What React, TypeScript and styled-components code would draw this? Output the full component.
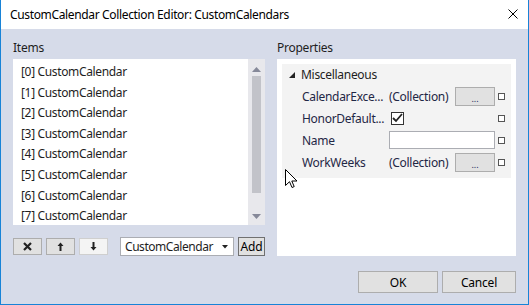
import React from "react";
import styled, { createGlobalStyle } from "styled-components";

const Global = createGlobalStyle`
  html, body { margin: 0; padding: 0; background: #ffffff; }
  body { font-family: "Noto Sans", "Open Sans", sans-serif; }
  * { box-sizing: border-box; }
`;

const FONT = `"Noto Sans", "Open Sans", sans-serif`;

const Window = styled.div`
  position: relative;
  width: 529px;
  height: 305px;
  display: flex;
  flex-direction: column;
  border-left: 1px solid #1883d7;
  border-right: 1px solid #1883d7;
  border-bottom: 1px solid #1883d7;
  font-family: ${FONT};
  font-size: 12px;
  color: #1e1e1e;
  overflow: hidden;
`;

const TitleBar = styled.div`
  height: 29px;
  flex: none;
  background: #ffffff;
  display: flex;
  align-items: center;
  justify-content: space-between;
  padding: 0 10px 0 9px;
`;

const Title = styled.span`
  font-size: 12px;
  color: #000;
  letter-spacing: -0.35px;
`;

const CloseBtn = styled.span`
  width: 10px;
  height: 10px;
  display: flex;
  margin-top: -1px;
`;

const Body = styled.div`
  flex: 1;
  background: #d6dbe9;
  display: flex;
  flex-direction: column;
  padding: 10px 11px 11px 12px;
`;

const Columns = styled.div`
  display: flex;
  gap: 12px;
`;

const Column = styled.div<{ $w: number }>`
  width: ${(p) => p.$w}px;
  display: flex;
  flex-direction: column;
`;

const GroupLabel = styled.div`
  height: 18px;
  line-height: 18px;
  margin-bottom: 2px;
  color: #1e1e1e;
  letter-spacing: -0.25px;
`;

const ListBox = styled.div`
  height: 166px;
  background: #fff;
  display: flex;
`;

const ListItems = styled.div`
  flex: 1;
  padding: 3px 0 0 8px;
`;

const ListItem = styled.div`
  height: 20.6px;
  line-height: 20.6px;
  letter-spacing: -0.35px;
  color: #1e1e1e;
`;

const ScrollBar = styled.div`
  width: 17px;
  background: #e8e8ec;
  display: flex;
  flex-direction: column;
  align-items: center;
  padding: 4px 0 3px;
`;

const ScrollArrow = styled.div`
  height: 12px;
  display: flex;
  align-items: center;
  justify-content: center;
`;

const Thumb = styled.div`
  width: 9px;
  height: 117px;
  background: #c2c3c9;
  margin-top: 1px;
`;

const Spacer = styled.div`
  flex: 1;
`;

const Toolbar = styled.div`
  margin-top: 12px;
  display: flex;
  align-items: center;
`;

const ToolButton = styled.div<{ $disabled?: boolean }>`
  width: 29px;
  height: 17px;
  margin-right: 4px;
  display: flex;
  align-items: center;
  justify-content: center;
  background: ${(p) => (p.$disabled ? "#f4f4f4" : "#e1e1e1")};
  border: 1px solid ${(p) => (p.$disabled ? "#cfcfcf" : "#adadad")};
`;

const Combo = styled.div`
  margin-left: 8px;
  width: 114px;
  height: 19px;
  background: #fff;
  border: 1px solid #abadb3;
  display: flex;
  align-items: center;
  justify-content: space-between;
  padding: 0 5px 0 4px;
  letter-spacing: -0.45px;
  white-space: nowrap;
`;

const AddButton = styled.div`
  margin-left: 4px;
  width: 27px;
  height: 19px;
  background: #e1e1e1;
  border: 1px solid #707070;
  display: flex;
  align-items: center;
  justify-content: center;
  font-size: 12px;
  letter-spacing: -0.2px;
  color: #000;
`;

const PropPanel = styled.div`
  height: 197px;
  background: #fff;
  padding: 5px;
`;

const Grid = styled.div`
  background: #f3f3f3;
  padding-bottom: 5px;
`;

const CategoryRow = styled.div`
  height: 21px;
  display: flex;
  align-items: center;
  padding-left: 7px;
  gap: 6px;
  letter-spacing: -0.3px;
`;

const PropRow = styled.div`
  height: 22px;
  display: flex;
  align-items: center;
  padding-left: 20px;
`;

const PropName = styled.div`
  width: 87px;
  color: #1f2745;
  letter-spacing: -0.3px;
  white-space: nowrap;
`;

const ValueCell = styled.div`
  width: 106px;
  display: flex;
  align-items: center;
  justify-content: space-between;
`;

const ValueText = styled.span`
  color: #1f2745;
  letter-spacing: -0.3px;
`;

const EllipsisBtn = styled.div`
  width: 40px;
  height: 19px;
  background: #e1e1e1;
  border: 1px solid #adadad;
  display: flex;
  align-items: flex-end;
  justify-content: center;
  font-size: 9px;
  line-height: 12px;
  color: #1f2a60;
`;

const TextBox = styled.div`
  width: 106px;
  height: 18px;
  background: #fff;
  border: 1px solid #abadb3;
`;

const CheckBox = styled.div`
  margin-left: 2px;
  width: 13px;
  height: 13px;
  border: 1px solid #333;
  background: #fff;
  display: flex;
  align-items: center;
  justify-content: center;
`;

const Marker = styled.div`
  margin-left: 3px;
  width: 7px;
  height: 7px;
  border: 1px solid #555;
  background: #fff;
`;

const Footer = styled.div`
  margin-top: auto;
  display: flex;
  justify-content: flex-end;
  gap: 4px;
  padding-right: 1px;
`;

const DialogButton = styled.div<{ $w: number }>`
  width: ${(p) => p.$w}px;
  height: 22px;
  background: #e1e1e1;
  border: 1px solid #adadad;
  display: flex;
  align-items: center;
  justify-content: center;
  color: #000;
  letter-spacing: -0.2px;
`;

const Cursor = styled.svg`
  position: absolute;
  left: 284px;
  top: 169px;
`;

const items = [0, 1, 2, 3, 4, 5, 6, 7];

export default function App() {
  return (
    <>
      <Global />
      <Window>
        <TitleBar>
          <Title>CustomCalendar Collection Editor: CustomCalendars</Title>
          <CloseBtn>
            <svg width="10" height="10" viewBox="0 0 10 10">
              <path d="M0.5 0.5 L9.5 9.5 M9.5 0.5 L0.5 9.5" stroke="#000" strokeWidth="1" />
            </svg>
          </CloseBtn>
        </TitleBar>
        <Body>
          <Columns>
            <Column $w={252}>
              <GroupLabel>Items</GroupLabel>
              <ListBox>
                <ListItems>
                  {items.map((i) => (
                    <ListItem key={i}>[{i}] CustomCalendar</ListItem>
                  ))}
                </ListItems>
                <ScrollBar>
                  <ScrollArrow>
                    <svg width="9" height="5" viewBox="0 0 9 5">
                      <path d="M0 5 L4.5 0 L9 5 Z" fill="#868999" />
                    </svg>
                  </ScrollArrow>
                  <Thumb />
                  <Spacer />
                  <ScrollArrow>
                    <svg width="9" height="5" viewBox="0 0 9 5">
                      <path d="M0 0 L4.5 5 L9 0 Z" fill="#868999" />
                    </svg>
                  </ScrollArrow>
                </ScrollBar>
              </ListBox>
              <Toolbar>
                <ToolButton>
                  <svg width="9" height="9" viewBox="0 0 9 9">
                    <path d="M1 1 L8 8 M8 1 L1 8" stroke="#222" strokeWidth="2.2" />
                  </svg>
                </ToolButton>
                <ToolButton>
                  <svg width="7" height="9" viewBox="0 0 7 9">
                    <path d="M3.5 0.5 L6.5 4 L4.5 4 L4.5 9 L2.5 9 L2.5 4 L0.5 4 Z" fill="#222" />
                  </svg>
                </ToolButton>
                <ToolButton $disabled>
                  <svg width="7" height="9" viewBox="0 0 7 9">
                    <path d="M3.5 8.5 L6.5 5 L4.5 5 L4.5 0 L2.5 0 L2.5 5 L0.5 5 Z" fill="#222" />
                  </svg>
                </ToolButton>
                <Combo>
                  <span>CustomCalendar</span>
                  <svg width="6" height="4" viewBox="0 0 6 4">
                    <path d="M0 0 L6 0 L3 3.5 Z" fill="#222" />
                  </svg>
                </Combo>
                <AddButton>Add</AddButton>
              </Toolbar>
            </Column>
            <Column $w={239}>
              <GroupLabel>Properties</GroupLabel>
              <PropPanel>
                <Grid>
                  <CategoryRow>
                    <svg width="6" height="6" viewBox="0 0 6 6">
                      <path d="M6 0 L6 6 L0 6 Z" fill="#222" />
                    </svg>
                    <span>Miscellaneous</span>
                  </CategoryRow>
                  <PropRow>
                    <PropName>CalendarExce...</PropName>
                    <ValueCell>
                      <ValueText>(Collection)</ValueText>
                      <EllipsisBtn>...</EllipsisBtn>
                    </ValueCell>
                    <Marker />
                  </PropRow>
                  <PropRow>
                    <PropName>HonorDefault...</PropName>
                    <ValueCell>
                      <CheckBox>
                        <svg width="11" height="10" viewBox="0 0 11 10">
                          <path d="M1 5 L4 8 L10 1" stroke="#222" strokeWidth="1.8" fill="none" />
                        </svg>
                      </CheckBox>
                    </ValueCell>
                    <Marker />
                  </PropRow>
                  <PropRow>
                    <PropName>Name</PropName>
                    <TextBox />
                    <Marker />
                  </PropRow>
                  <PropRow>
                    <PropName>WorkWeeks</PropName>
                    <ValueCell>
                      <ValueText>(Collection)</ValueText>
                      <EllipsisBtn>...</EllipsisBtn>
                    </ValueCell>
                    <Marker />
                  </PropRow>
                </Grid>
              </PropPanel>
            </Column>
          </Columns>
          <Footer>
            <DialogButton $w={80}>OK</DialogButton>
            <DialogButton $w={74}>Cancel</DialogButton>
          </Footer>
        </Body>
        <Cursor width="13" height="20" viewBox="0 0 13 20">
          <path
            d="M0.5 0.5 L0.5 16.5 L4.5 12.7 L7 18.5 L9.2 17.6 L6.8 12 L12 12 Z"
            fill="#fff"
            stroke="#000"
            strokeWidth="1"
            strokeLinejoin="miter"
          />
        </Cursor>
      </Window>
    </>
  );
}
